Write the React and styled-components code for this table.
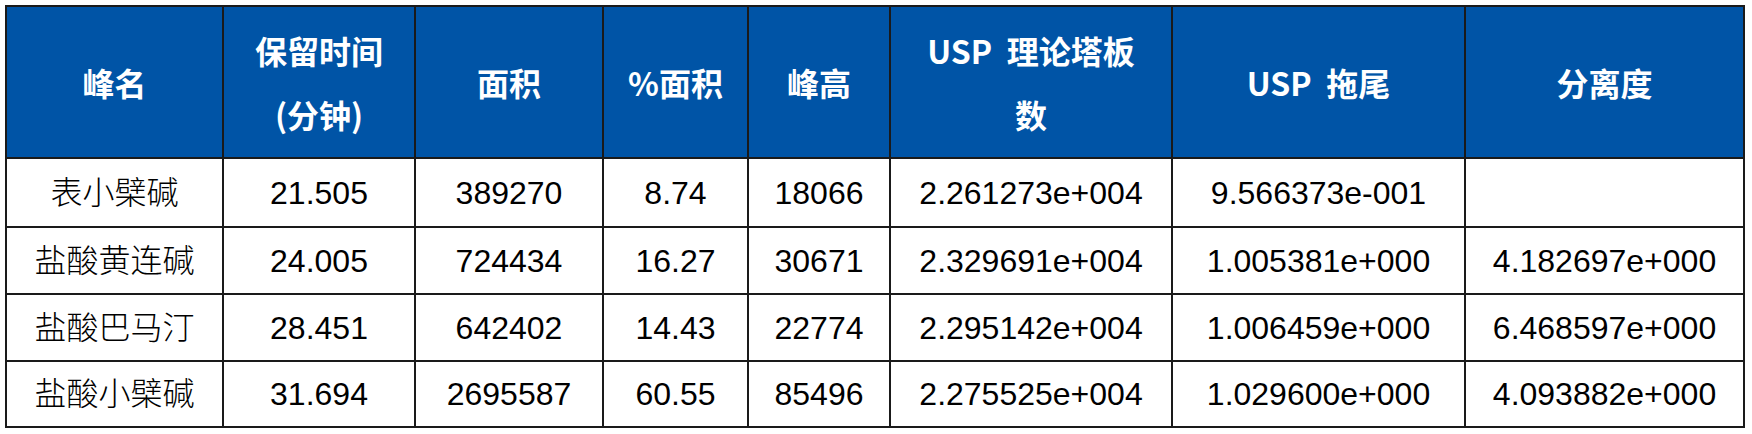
import React from 'react';
import styled, { createGlobalStyle } from 'styled-components';

const GlobalStyle = createGlobalStyle`
  body {
    margin: 0;
    background: #ffffff;
  }
`;

const Table = styled.table`
  margin: 5px 0 0 5px;
  width: 1740px;
  table-layout: fixed;
  border-collapse: collapse;
  border: 2px solid #6e6e6e;
`;

const HeadRow = styled.tr`
  height: 152px;
`;

const BodyRow = styled.tr`
  height: ${props => props.h}px;
`;

const Th = styled.th`
  background-color: #0054a6;
  color: #ffffff;
  border: 2px solid #1a1a1a;
  font-family: "Noto Sans CJK SC", "Liberation Sans", sans-serif;
  font-weight: 700;
  font-size: 32px;
  line-height: 64px;
  text-align: center;
  vertical-align: middle;
  padding: 0 6px;
`;

const Td = styled.td`
  border: 2px solid #1a1a1a;
  color: #000000;
  font-family: ${props => props.cjk
    ? '"Liberation Serif", "Noto Sans CJK SC", serif'
    : '"Liberation Sans", Arial, sans-serif'};
  font-weight: ${props => props.cjk ? 300 : 400};
  font-size: 32px;
  line-height: 40px;
  text-align: center;
  vertical-align: middle;
  padding: 0 4px;
  white-space: nowrap;
`;

const widths = [217, 192, 188, 145, 142, 282, 293, 279];

const headers = [
  '峰名',
  <>保留时间<br />(分钟)</>,
  '面积',
  '%面积',
  '峰高',
  <>USP&nbsp; 理论塔板<br />数</>,
  <>USP&nbsp; 拖尾</>,
  '分离度',
];

const rows = [
  ['表小檗碱', '21.505', '389270', '8.74', '18066', '2.261273e+004', '9.566373e-001', ''],
  ['盐酸黄连碱', '24.005', '724434', '16.27', '30671', '2.329691e+004', '1.005381e+000', '4.182697e+000'],
  ['盐酸巴马汀', '28.451', '642402', '14.43', '22774', '2.295142e+004', '1.006459e+000', '6.468597e+000'],
  ['盐酸小檗碱', '31.694', '2695587', '60.55', '85496', '2.275525e+004', '1.029600e+000', '4.093882e+000'],
];

const rowHeights = [69, 67, 67, 66];

export default function App() {
  return (
    <>
      <GlobalStyle />
      <Table>
        <colgroup>
          {widths.map((w, i) => <col key={i} style={{ width: w }} />)}
        </colgroup>
        <thead>
          <HeadRow>
            {headers.map((h, i) => <Th key={i}>{h}</Th>)}
          </HeadRow>
        </thead>
        <tbody>
          {rows.map((r, i) => (
            <BodyRow key={i} h={rowHeights[i]}>
              {r.map((c, j) => <Td key={j} cjk={j === 0}>{c}</Td>)}
            </BodyRow>
          ))}
        </tbody>
      </Table>
    </>
  );
}
